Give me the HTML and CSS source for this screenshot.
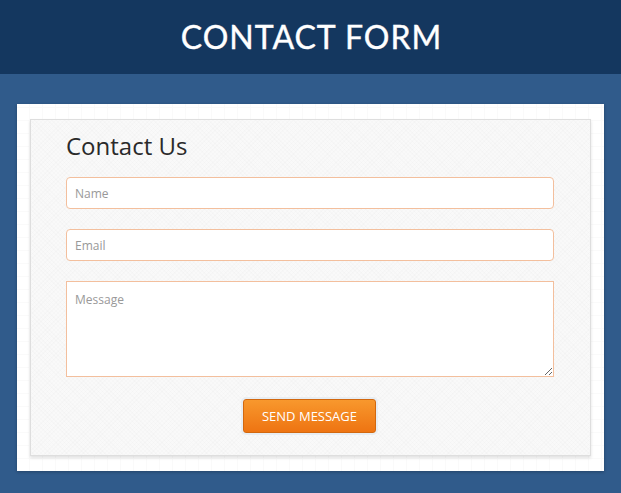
FILE: index.html
```html
<!DOCTYPE html>
<html lang="en">
<head>
    <meta charset="UTF-8">
    <meta name="viewport" content="width=device-width, initial-scale=1.0">
    <title>Contact Form</title>
    <link rel="stylesheet" href="styles.css">
</head>
<body>
<header class="page-header">
    <h1>CONTACT FORM</h1>
</header>

<div class="wrapper">
    <!-- Outer white card -->
    <div class="card">
        <!-- Inner panel holding the form -->
        <form class="panel" onsubmit="return false;">
            <h2>Contact Us</h2>
            <input type="text" class="field" placeholder="Name">
            <input type="email" class="field" placeholder="Email">
            <textarea class="field message" placeholder="Message"></textarea>
            <div class="actions">
                <button type="submit" class="send-btn">SEND MESSAGE</button>
            </div>
        </form>
    </div>
</div>
</body>
</html>
```

FILE: styles.css
```css
body {
    margin: 0;
    padding: 0;
    font-family: "Open Sans", Arial, sans-serif;
    background-color: #305b8b;
    color: #333;
}

.page-header {
    background-color: #14375f;
    height: 74px;
    display: flex;
    align-items: center;
    justify-content: center;
}

.page-header h1 {
    margin: 0 0 1px 2px;
    font-family: Lato, "Open Sans", sans-serif;
    font-weight: 400;
    font-size: 32px;
    color: #fff;
    letter-spacing: 1px;
    -webkit-text-stroke: 0.4px #fff;
}

.wrapper {
    padding: 30px 17px 21px;
}

.card {
    background-color: #fff;
    background-image:
        repeating-linear-gradient(0deg, transparent 0 12px, #fafafa 12px 13px),
        repeating-linear-gradient(90deg, transparent 0 12px, #fafafa 12px 13px);
    padding: 15px 13px 15px;
    box-shadow: 0 1px 3px rgba(0, 0, 0, 0.25);
}

.panel {
    display: flex;
    flex-direction: column;
    gap: 20px;
    background-color: #f9f9f9;
    background-image:
        repeating-linear-gradient(45deg, transparent 0 2px, rgba(0, 0, 0, 0.01) 2px 3px),
        repeating-linear-gradient(-45deg, transparent 0 2px, rgba(0, 0, 0, 0.01) 2px 3px);
    border: 1px solid #dedede;
    box-shadow: 0 2px 3px rgba(0, 0, 0, 0.12);
    padding: 10px 36px 22px 35px;
}

.panel h2 {
    margin: 0 0 -5px;
    font-size: 24px;
    font-weight: 400;
    line-height: 32px;
    color: #2a2a2a;
}

.field {
    box-sizing: border-box;
    width: 100%;
    height: 32px;
    padding: 6px 8px;
    border: 1px solid #f3bf9d;
    border-radius: 4px;
    background: #fff;
    font-family: "Open Sans", Arial, sans-serif;
    font-size: 12px;
    color: #555;
    outline: none;
}

.field::placeholder {
    color: #999;
}

.message {
    height: 96px;
    border-radius: 0;
    resize: vertical;
    padding-top: 9px;
}

.actions {
    display: flex;
    justify-content: center;
    padding-top: 2px;
}

.send-btn {
    width: 133px;
    height: 34px;
    border: 1px solid #d2680f;
    border-radius: 3px;
    background: linear-gradient(#f8982d, #ee7412);
    box-shadow: 0 0 0 2px #e8edf2;
    color: #fff;
    font-family: "Open Sans", Arial, sans-serif;
    font-size: 13px;
    cursor: pointer;
    margin-left: -1px;
}
```
